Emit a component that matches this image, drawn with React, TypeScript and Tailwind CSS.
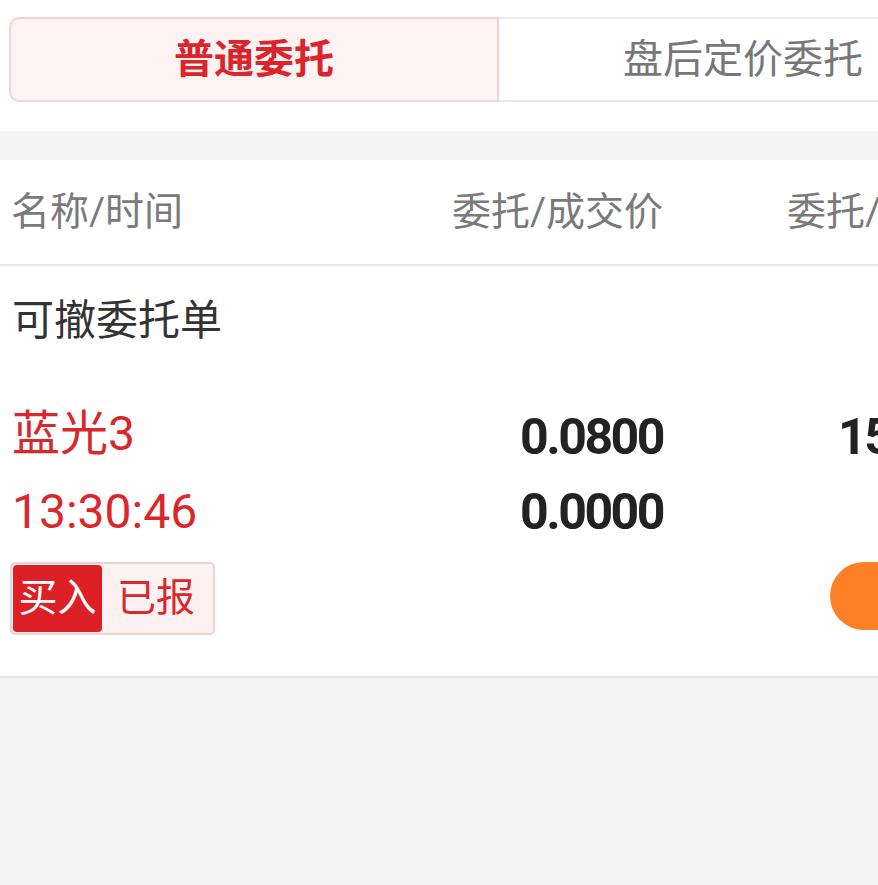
import React from 'react';

const order = {
  name: '蓝光3',
  time: '13:30:46',
  price: '0.0800',
  dealPrice: '0.0000',
  amount: '150000',
  side: '买入',
  status: '已报',
};

export default function App() {
  return (
    <div className="min-h-screen w-full overflow-hidden bg-[#f4f4f4] font-['Roboto','Noto_Sans_CJK_SC',sans-serif]">
      {/* Tabs */}
      <div className="h-[131px] bg-white pt-[17px] pl-[9px]">
        <div className="flex h-[85px] w-[980px]">
          <div className="flex w-[490px] items-center justify-center rounded-l-[10px] border-2 border-[#f3d3d4] bg-[#fef2f2] text-[40px] font-bold text-[#d9252b]">
            普通委托
          </div>
          <div className="flex w-[490px] items-center justify-center border-2 border-l-0 border-[#e9e9e9] bg-white text-[40px] text-[#777777]">
            盘后定价委托
          </div>
        </div>
      </div>

      <div className="h-[29px]" />

      <div className="w-[1100px] bg-white">
        {/* Column header */}
        <div className="flex h-[106px] items-center border-b-2 border-[#e6e6e6] text-[39px] text-[#7a7a7a]">
          <div className="w-[400px] pl-[11px]">名称/时间</div>
          <div className="w-[263px] text-right">委托/成交价</div>
          <div className="pl-[124px]">委托/成交量</div>
        </div>

        {/* Section title */}
        <div className="flex h-[108px] items-center pl-[12px] text-[42px] text-[#333333]">可撤委托单</div>

        {/* Order row */}
        <div className="flex border-b-2 border-[#e4e4e4] pt-[30px] pb-[41px]">
          <div className="flex w-[400px] flex-col pl-[10px]">
            <div className="h-[62px] pl-[2px] text-[48px] leading-[60px] text-[#d9282c]">{order.name}</div>
            <div className="mt-[15px] h-[62px] pl-[2px] text-[48px] leading-[62px] text-[#d9282c]">{order.time}</div>
            <div className="mt-[19px] flex h-[73px] w-[205px] items-center rounded-[5px] border-2 border-[#f5cfd0] bg-[#fef1f1] p-px">
              <div className="flex h-full w-[89px] items-center justify-center rounded-[4px] bg-[#dd2026] text-[39px] text-white">
                {order.side}
              </div>
              <div className="pl-[15px] text-[39px] text-[#d9282c]">{order.status}</div>
            </div>
          </div>
          <div className="flex w-[263px] flex-col items-end text-[50px] font-bold tracking-[-2.5px] text-[#222222]">
            <div className="h-[62px] leading-[66px]">{order.price}</div>
            <div className="mt-[15px] h-[62px] leading-[62px]">{order.dealPrice}</div>
          </div>
          <div className="flex flex-col">
            <div className="h-[62px] pl-[175px] text-[50px] font-bold leading-[66px] tracking-[-2.5px] text-[#222222]">
              {order.amount}
            </div>
            <div className="mt-[15px] h-[62px]" />
            <div className="mt-[19px] ml-[167px] flex h-[68px] items-center rounded-full bg-[#fd8026] pl-[47px] pr-[40px] text-[38px] text-white">
              撤单
            </div>
          </div>
        </div>
      </div>
    </div>
  );
}
